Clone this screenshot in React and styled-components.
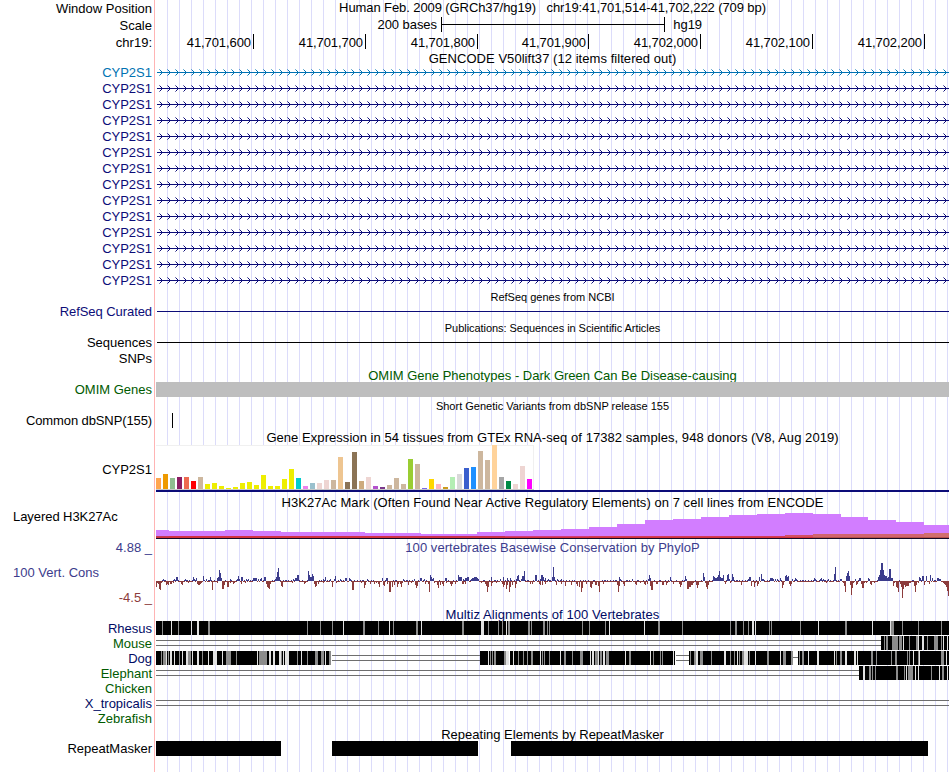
import React from 'react';
import styled, { createGlobalStyle } from 'styled-components';

const GlobalStyle = createGlobalStyle`
  body {
    margin: 0;
    background: #ffffff;
  }
`;

const NAVY = '#0c0c78';
const GREEN = '#005a00';
const MULTIZ_BLUE = '#000a64';
const CONS_BLUE = '#3c3c8c';
const CONS_RED = '#8c3c3c';

const TRACK_START = 156;
const TRACK_WIDTH = 793;

const Browser = styled.div`
  width: 949px;
  height: 772px;
  overflow: hidden;
  font-family: 'Liberation Sans', Arial, sans-serif;
  font-size: 13px;
  color: #000000;
  background-image:
    linear-gradient(to right, #fff 154px, #ffb4b4 154px, #ffb4b4 155px, #fff 155px, #fff 160px, transparent 160px),
    linear-gradient(to right, #dcdcfa 1px, transparent 1px);
  background-size: 949px 772px, 12px 772px;
  background-position: 0 0, 11px 0;
  background-repeat: no-repeat, repeat-x;
`;

const Row = styled.div`
  display: grid;
  grid-template-columns: 156px 793px;
  height: ${(p) => p.$h}px;
`;

const Label = styled.div`
  box-sizing: border-box;
  height: ${(p) => p.$h || 16}px;
  line-height: ${(p) => p.$h || 16}px;
  padding: 0 ${(p) => (p.$left ? 0 : 4)}px 0 ${(p) => (p.$left ? 13 : 0)}px;
  margin-top: ${(p) => p.$top || 0}px;
  text-align: ${(p) => (p.$left ? 'left' : 'right')};
  letter-spacing: ${(p) => p.$track || 0}px;
  white-space: pre;
  color: ${(p) => p.$color || '#000'};
`;

const Title = styled.div`
  height: ${(p) => p.$h || 16}px;
  line-height: ${(p) => p.$h || 16}px;
  margin-top: ${(p) => p.$top || 0}px;
  font-size: ${(p) => (p.$small ? 11 : 13)}px;
  letter-spacing: ${(p) => p.$track || 0}px;
  text-align: center;
  white-space: pre;
  color: ${(p) => p.$color || '#000'};
`;

const Drawing = styled.svg`
  display: block;
  overflow: visible;
  shape-rendering: crispEdges;
`;

const ScaleBar = styled.div`
  display: flex;
  align-items: flex-start;
  line-height: 16px;
  height: 16px;
`;

const ScaleText = styled.span`
  width: ${(p) => p.$w}px;
  padding-right: ${(p) => p.$gap || 0}px;
  text-align: right;
  letter-spacing: -0.05px;
`;

const ScaleRule = styled.div`
  box-sizing: border-box;
  width: 224px;
  height: 15px;
  border-left: 1px solid #000;
  border-right: 1px solid #000;
  background: linear-gradient(#000, #000) 0 7px / 100% 1px no-repeat;
`;

const Ruler = styled.div`
  display: grid;
  grid-template-columns: 98px 112px 112px 111px 112px 112px 112px;
`;

const RulerMark = styled.div`
  height: 15px;
  line-height: 17px;
  padding-right: 2px;
  border-right: 1px solid #000;
  text-align: right;
  letter-spacing: -0.08px;
`;

const Solid = styled.div`
  height: ${(p) => p.$h}px;
  margin-top: ${(p) => p.$top || 0}px;
  margin-left: ${(p) => p.$x || 0}px;
  width: ${(p) => (p.$w ? `${p.$w}px` : 'auto')};
  background: ${(p) => p.$color || '#000'};
`;

const Repeats = styled.div`
  display: grid;
  grid-template-columns: 125px 51px 146px 33px 417px;
  height: 15px;
`;

const Repeat = styled.div`
  grid-column: ${(p) => p.$col};
  background: #000;
`;

const ExpressionChart = styled.div`
  border-bottom: 2px solid ${NAVY};
  height: 45px;
`;

const ExpressionBox = styled.div`
  box-sizing: border-box;
  display: flex;
  align-items: flex-end;
  gap: 2px;
  width: 378px;
  height: 45px;
  background: #fff;
  box-shadow: inset 0 1px #f0f0f0, inset -1px 0 #f0f0f0;
  border-bottom: 1px solid #c8c8c8;
`;

const ExpressionBar = styled.div`
  width: 5px;
  height: ${(p) => p.$v}px;
  background: ${(p) => p.$color};
`;

const RULER = ['41,701,600', '41,701,700', '41,701,800', '41,701,900', '41,702,000', '41,702,100', '41,702,200'];

const tan = '#cdb79e';
const yellow = '#eeee00';
const pink = '#eed5d2';
const EXPRESSION = [
  [11, '#ffa54f'], [15, '#ee9a00'], [11, '#8fbc8f'], [12, '#8b1c62'], [12, '#ee6a50'], [8, '#ff0000'], [12, tan],
  [5, yellow], [6, yellow], [3, yellow], [1, yellow], [2, yellow], [6, yellow], [7, yellow], [4, yellow],
  [14, yellow], [3, yellow], [3, yellow], [10, yellow], [20, yellow], [11, '#00cdcd'], [3, '#ee82ee'],
  [6, '#9ac0cd'], [6, pink], [9, pink], [9, tan], [32, '#eec591'], [7, '#8b7355'], [37, '#8b7355'],
  [8, '#cdaa7d'], [12, pink], [3, '#b452cd'], [2, '#7a378b'], [4, tan], [11, tan], [5, tan], [30, '#9acd32'],
  [25, tan], [1, '#7a67ee'], [10, '#ffd700'], [5, '#ffb6c1'], [2, '#cd9b1d'], [12, '#b4eeb4'], [15, '#d9d9d9'],
  [21, '#3a5fcd'], [22, '#1e90ff'], [38, tan], [29, tan], [44, '#ffd39b'], [12, '#a6a6a6'], [8, '#008b45'],
  [5, pink], [23, pink], [10, '#ff00ff'],
];

// [start, height above the base line]
const H3K27AC = [
  [156, 8], [169, 7], [225, 8], [253, 7], [281, 6], [365, 5], [421, 4], [477, 6], [505, 7], [533, 8], [561, 9],
  [589, 11], [617, 14], [645, 18], [673, 19], [701, 21], [729, 23], [757, 24], [785, 25], [813, 24], [841, 21],
  [868, 18], [896, 16], [924, 13], [949, 0],
];
const H3K27AC_LOW = [[156, 2, '#c03c5a'], [169, 2, '#d23246'], [393, 2, '#c83250'], [505, 2, '#d23c78'], [589, 2, '#d23c5a'], [785, 3, '#d25064'], [813, 4, '#d2646e'], [924, 5, '#d26e6e'], [949, 0, '']];

// "position height" pairs, position in pixels from the left edge of the browser
const CONS_UP = `163 2,173 1,174 2,176 4,177 4,185 2,193 4,194 2,196 3,203 5,204 1,206 2,210 4,217 3,218 4,219 11,220 8,221 3,
230 2,237 2,238 5,239 2,241 4,242 4,246 2,248 2,253 3,254 3,255 3,256 3,258 2,260 2,261 3,264 4,265 4,275 2,276 4,277 9,278 13,279 4,
293 2,295 3,296 3,297 6,298 6,308 10,309 6,310 4,311 4,312 7,313 5,323 2,325 4,330 2,334 2,335 5,340 2,345 3,346 3,349 3,350 2,367 2,
382 3,386 3,387 3,403 2,414 2,420 3,421 3,424 2,430 6,431 4,432 2,433 3,445 3,446 3,458 6,459 4,460 4,461 4,463 2,465 3,466 3,467 4,468 4,
471 2,472 3,473 3,474 4,475 4,476 4,477 3,478 2,491 4,500 2,503 4,507 3,510 3,516 2,517 5,518 6,521 2,522 5,523 5,524 10,535 6,536 6,
540 2,541 6,542 6,543 4,545 3,548 2,552 4,553 14,554 4,557 2,561 2,619 4,620 2,632 2,648 2,649 6,650 3,670 4,685 5,686 2,703 8,704 4,
713 5,714 4,715 3,716 3,717 4,718 6,719 10,720 4,721 3,722 3,723 6,727 6,728 7,729 2,732 7,733 4,748 2,749 4,750 4,759 4,761 7,762 2,763 2,
770 3,771 3,772 3,773 2,775 2,777 2,780 3,785 5,786 6,787 4,788 5,792 2,795 3,796 2,814 3,815 2,820 2,821 3,823 2,828 2,834 7,835 14,
840 2,841 2,846 5,847 8,848 10,849 5,855 2,859 3,860 3,868 3,869 2,878 4,879 6,880 11,881 18,882 18,883 11,884 6,885 5,886 5,887 3,888 4,
889 12,890 12,891 3,892 3,919 4,920 3,922 5,923 5,926 5,930 6,932 3,937 3,938 3,939 2,940 2`;

const CONS_DOWN = `156 6,157 2,158 3,159 8,160 9,161 2,166 4,167 3,168 4,170 3,171 3,173 2,181 3,182 4,188 2,197 3,198 4,199 4,200 3,201 2,
212 9,217 2,222 8,223 8,224 4,227 6,228 6,230 2,233 3,234 2,241 3,245 2,266 3,267 6,268 7,269 8,270 3,281 5,282 6,292 2,304 3,305 2,
314 3,315 6,316 5,318 3,323 2,332 6,336 2,352 9,353 9,361 2,364 7,365 4,370 3,374 3,376 2,378 3,379 6,383 4,384 5,387 3,389 11,390 11,
392 6,394 4,397 6,398 3,400 3,401 6,402 2,408 4,411 2,415 4,416 7,417 5,425 3,428 3,429 11,434 2,437 4,438 7,440 4,442 3,443 5,446 2,
450 3,451 5,452 3,455 3,462 3,463 3,465 3,481 2,485 3,486 5,487 11,488 6,491 5,492 2,496 2,502 3,503 6,504 4,506 8,507 4,509 11,510 6,
512 4,515 7,516 3,530 3,532 3,539 3,540 4,542 4,545 3,556 4,561 3,565 5,571 4,576 3,577 5,579 6,581 11,582 7,586 3,590 6,591 7,592 3,
595 4,596 4,598 5,599 11,603 3,617 4,618 11,619 5,623 3,624 5,635 3,636 4,640 2,644 3,645 4,647 3,650 5,651 9,652 9,656 3,657 3,662 4,663 4,
666 4,667 2,673 3,679 3,680 6,681 4,687 8,688 8,689 6,690 6,691 4,692 4,693 2,696 4,697 7,698 4,705 2,706 6,707 8,708 4,725 3,730 2,
741 4,751 5,754 6,755 2,757 5,758 3,782 7,783 4,789 3,790 5,791 3,826 2,843 2,844 5,845 11,850 4,851 14,852 7,853 2,856 4,857 3,
861 3,862 7,863 7,864 2,866 2,870 3,871 4,874 2,893 5,894 2,896 6,897 7,898 11,900 3,901 6,902 17,903 8,904 4,905 6,906 5,907 5,908 5,
909 2,910 2,914 5,915 11,916 4,918 2,924 4,929 3,943 2,944 3,945 4,946 6,947 10,948 15`;

const parsePairs = (text) => text.split(',').map((pair) => pair.trim().split(' ').map(Number));

// g = partly conserved, w = nearly no identity; each mark is start, kind, width
const ALIGNMENTS = [
  {
    name: 'Rhesus', color: MULTIZ_BLUE, blocks: [[156, 949]], gaps: [],
    marks: `162g1 171w1 178g1 191w1 197w2 208g2 307g1 320g1 332g1 343w1 363g2 378g1 389w1 393g1 416g2 421w1 462g2 481w1 482w2 488g1
498g1 502g1 506w1 508g2 528g2 531g1 543g2 547g1 549g1 582g1 589g1 605g1 609w1 644w1 658g2 682g1 730g1 735g2 743g1 748g1 752w2 755w1 769g1
771g1 800g1 818w1 845g2 872w1 890w1 891g3 902g1 918g1 941g1`,
  },
  {
    name: 'Mouse', color: GREEN, blocks: [[881, 949]], gaps: [[156, 881]],
    marks: '884g1 886g2 892g6 899g3 903w1 909g1 916g2 918w1 922w2 927g1 934g4 941g1 943w1 947w1',
  },
  {
    name: 'Dog', color: MULTIZ_BLUE, blocks: [[156, 331], [480, 509], [510, 675], [689, 793], [798, 949]],
    gaps: [[332, 480], [676, 689]],
    marks: `161g1 163g3 166w1 168g1 170w2 174w1 179g1 182w1 186w2 188g3 192w1 197w2 202g1 208w1 213w4 222w1 226g2 228g3 236g1
257w1 259g8 269w2 273w2 279w2 281g1 283w1 285w4 297g1 301w1 307g1 315g3 321g3 325w1 329g2 488w1 490g1 492g1 494g2 504g2 506w3
513w1 518g1 523g1 527g1 531g2 540w1 542g1 544g1 549g1 560w1 564g2 572g1 580g3 590w1 592w2 595g3 598w1 600g2 603w2 606g3 625w1 629g2
650w1 653g1 660g1 662g1 673w1 690g1 694g2 696w2 700g3 711g1 724w2 730g1 734g1 737w1 739g1 742g2 744w4 749g1 755w1 767g2 780w1 783g3
791g2 799g1 802g2 808w1 817w2 834w1 836g1 840g2 845w2 854w2 857w1 871g2 876g1 891g1 895g2 907g1 909g1 913w1 918g1 919w1 941g3 946w1`,
  },
  {
    name: 'Elephant', color: GREEN, blocks: [[859, 949]], gaps: [[156, 859]],
    marks: '863w2 869g2 872g1 875g1 896g2 904g1 906w1 908g5 915w1 918w1 931g1 939w1 942g2 947w1',
  },
  { name: 'Chicken', color: GREEN, blocks: [], gaps: [], marks: '' },
  { name: 'X_tropicalis', color: MULTIZ_BLUE, blocks: [], gaps: [[156, 949]], marks: '' },
  { name: 'Zebrafish', color: GREEN, blocks: [], gaps: [], marks: '' },
];

const GeneLine = ({ color }) => {
  const tips = [];
  for (let x = 6; x < TRACK_WIDTH; x += 8) tips.push(x);
  return (
    <Drawing width={TRACK_WIDTH} height="16">
      <rect x="1" y="8" width="792" height="1" fill={color} />
      <path
        fill={color}
        d={tips.map((x) => `M${x - 1} 7h1v1h-1zM${x - 1} 9h1v1h-1zM${x - 2} 6h1v1h-1zM${x - 2} 10h1v1h-1z`).join('')}
      />
      <path fill={color} opacity="0.55" d={tips.map((x) => `M${x - 3} 5h1v1h-1zM${x - 3} 11h1v1h-1z`).join('')} />
    </Drawing>
  );
};

const Histone = () => (
  <Drawing width={TRACK_WIDTH} height="28">
    {H3K27AC.slice(0, -1).map(([x, v], i) => (
      <rect key={x} x={x - TRACK_START} y={27 - v} width={H3K27AC[i + 1][0] - x} height={v} fill="#d27dff" />
    ))}
    {H3K27AC_LOW.slice(0, -1).map(([x, v, color], i) => (
      <rect key={x} x={x - TRACK_START} y={27 - v} width={H3K27AC_LOW[i + 1][0] - x} height={v} fill={color} />
    ))}
    <rect y="26" width="657" height="1" fill="#d2323c" />
    <rect x="657" y="26" width="136" height="1" fill="#b4504b" />
    <rect y="27" width="793" height="1" fill="#140a28" />
  </Drawing>
);

const Conservation = () => {
  const up = new Map(parsePairs(CONS_UP));
  const down = new Map(parsePairs(CONS_DOWN));
  let ups = '';
  let downs = '';
  for (let x = TRACK_START; x < 949; x += 1) {
    const left = x - TRACK_START;
    const small = (x * 7) % 11 < 5 ? 1 : 0;
    const h = up.get(x) || (down.has(x) ? 0 : small);
    const d = down.get(x) || (up.has(x) ? 0 : 1);
    if (h) ups += `M${left} ${25 - h}h1v${h}h-1z`;
    if (d) downs += `M${left} 25h1v${d}h-1z`;
  }
  return (
    <Drawing width={TRACK_WIDTH} height="50">
      <path d={ups} fill={CONS_BLUE} />
      <path d={downs} fill={CONS_RED} />
    </Drawing>
  );
};

const Alignment = ({ blocks, gaps, marks, single }) => (
  <Drawing width={TRACK_WIDTH} height="15" viewBox="156 0 793 15">
    {gaps.map(([from, to]) => (
      <path key={from} d={`M${from} 4H${to}v1H${from}zM${from} 9H${to}v1H${from}z`} fill="#6e6e6e" />
    ))}
    {blocks.map(([from, to]) => (
      <rect key={from} x={from} width={to - from} height="14" />
    ))}
    {marks.split(/\s+/).filter(Boolean).map((mark) => {
      const [, x, kind, w] = mark.match(/(\d+)([gw])(\d)/);
      return <rect key={mark} x={x} width={w} height="14" fill={kind === 'g' ? '#8c8c8c' : '#e1e1e1'} />;
    })}
    {single && <rect x="793" y="6" width="5" height="1" fill="#6e6e6e" />}
  </Drawing>
);

const TitleRow = ({ h = 16, children, ...rest }) => (
  <Row $h={h}>
    <span />
    <Title $h={h} {...rest}>{children}</Title>
  </Row>
);

const App = () => (
  <>
    <GlobalStyle />
    <Browser>
      <Row $h={17}>
        <Label $h={17}>Window Position</Label>
        <Title $h={15} $track={-0.09}>{'Human Feb. 2009 (GRCh37/hg19)   chr19:41,701,514-41,702,222 (709 bp)'}</Title>
      </Row>
      <Row $h={17}>
        <Label $h={17}>Scale</Label>
        <ScaleBar>
          <ScaleText $w={281} $gap={4}>200 bases</ScaleText>
          <ScaleRule />
          <ScaleText $w={37}>hg19</ScaleText>
        </ScaleBar>
      </Row>
      <Row $h={17}>
        <Label $h={17}>chr19:</Label>
        <Ruler>
          {RULER.map((mark) => <RulerMark key={mark}>{mark}</RulerMark>)}
        </Ruler>
      </Row>
      <TitleRow h={13} $top={1} $track={0.05}>GENCODE V50lift37 (12 items filtered out)</TitleRow>
      {Array.from({ length: 14 }, (_, i) => (
        <Row key={i} $h={16}>
          <Label $top={1} $color={i === 0 ? '#0072b2' : NAVY}>CYP2S1</Label>
          <GeneLine color={i === 0 ? '#0072b2' : NAVY} />
        </Row>
      ))}
      <TitleRow h={15} $small $top={2}>RefSeq genes from NCBI</TitleRow>
      <Row $h={16}>
        <Label $top={1} $track={-0.07} $color={NAVY}>RefSeq Curated</Label>
        <Solid $h={1} $top={8} $x={1} $color={NAVY} />
      </Row>
      <TitleRow h={15} $small $top={2} $track={-0.05}>Publications: Sequences in Scientific Articles</TitleRow>
      <Row $h={16}>
        <Label $top={1}>Sequences</Label>
        <Solid $h={1} $top={8} $x={1} />
      </Row>
      <Row $h={17}>
        <Label $top={1}>SNPs</Label>
      </Row>
      <TitleRow h={15} $top={1} $color={GREEN}>OMIM Gene Phenotypes - Dark Green Can Be Disease-causing</TitleRow>
      <Row $h={16}>
        <Label $color={GREEN}>OMIM Genes</Label>
        <Solid $h={15} $color="#bebebe" />
      </Row>
      <TitleRow h={15} $small $top={1}>Short Genetic Variants from dbSNP release 155</TitleRow>
      <Row $h={16}>
        <Label $track={-0.11}>Common dbSNP(155)</Label>
        <Solid $h={15} $x={16} $w={1} />
      </Row>
      <TitleRow $top={1} $track={0.055}>Gene Expression in 54 tissues from GTEx RNA-seq of 17382 samples, 948 donors (V8, Aug 2019)</TitleRow>
      <Row $h={50}>
        <Label $top={17}>CYP2S1</Label>
        <ExpressionChart>
          <ExpressionBox>
            {EXPRESSION.map(([v, color], i) => <ExpressionBar key={i} $v={v} $color={color} />)}
          </ExpressionBox>
        </ExpressionChart>
      </Row>
      <Row $h={44}>
        <Label $left $top={14} $track={-0.06}>Layered H3K27Ac</Label>
        <div>
          <Title $track={0.05}>H3K27Ac Mark (Often Found Near Active Regulatory Elements) on 7 cell lines from ENCODE</Title>
          <Histone />
        </div>
      </Row>
      <Row $h={68}>
        <div>
          <Label $color={CONS_BLUE} $top={1}>4.88 _</Label>
          <Label $left $color={CONS_BLUE} $top={9}>100 Vert. Cons</Label>
          <Label $color={CONS_RED} $top={9}>-4.5 _</Label>
        </div>
        <div>
          <Title $top={1} $track={0.05} $color={CONS_BLUE}>100 vertebrates Basewise Conservation by PhyloP</Title>
          <Conservation />
        </div>
      </Row>
      <TitleRow h={14} $top={1} $track={0.08} $color={MULTIZ_BLUE}>Multiz Alignments of 100 Vertebrates</TitleRow>
      {ALIGNMENTS.map((a) => (
        <Row key={a.name} $h={15}>
          <Label $h={15} $color={a.color}>{a.name}</Label>
          <Alignment {...a} single={a.name === 'Dog'} />
        </Row>
      ))}
      <TitleRow h={15} $top={1}>Repeating Elements by RepeatMasker</TitleRow>
      <Row $h={31}>
        <Label>RepeatMasker</Label>
        <Repeats>
          <Repeat $col={1} />
          <Repeat $col={3} />
          <Repeat $col={5} />
        </Repeats>
      </Row>
    </Browser>
  </>
);

export default App;
